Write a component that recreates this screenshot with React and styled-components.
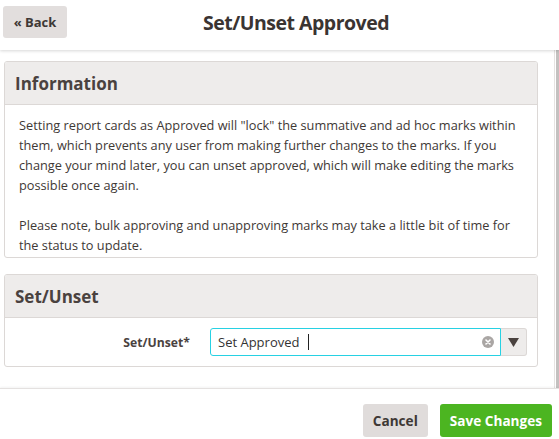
import styled, { createGlobalStyle } from "styled-components";

const Global = createGlobalStyle`
  * { box-sizing: border-box; }
  body {
    margin: 0;
    background: #ffffff;
    font-family: "Open Sans", "Noto Sans", sans-serif;
    color: #3e3835;
  }
`;

const Page = styled.div`
  width: 559px;
  height: 439px;
  display: flex;
  flex-direction: column;
  overflow: hidden;
`;

const Header = styled.header`
  height: 50px;
  display: flex;
  align-items: center;
  padding: 0 34px 0 3px;
  box-shadow: 0 1px 3px rgba(0, 0, 0, 0.16);
  position: relative;
  z-index: 1;
`;

const BackButton = styled.button`
  width: 64px;
  height: 32px;
  margin-top: -7px;
  border: none;
  border-radius: 3px;
  background: #e2dedd;
  color: #3e3835;
  font-family: inherit;
  font-weight: 700;
  font-size: 13px;
`;

const Title = styled.h1`
  flex: 1;
  margin: -5px 0 0;
  text-align: center;
  font-size: 19.5px;
  letter-spacing: -0.5px;
  font-weight: 700;
  color: #3a3432;
`;

const Body = styled.div`
  flex: 1;
  display: flex;
  min-height: 0;
`;

const Content = styled.main`
  flex: 1;
  padding: 11px 16px 0 4px;
  display: flex;
  flex-direction: column;
  gap: 16px;
`;

const Scroll = styled.div`
  width: 6px;
  border-left: 1px solid #e6e3e2;
  display: flex;
  justify-content: flex-end;
`;

const Thumb = styled.div`
  width: 3px;
  height: 100%;
  background: #c4c1c0;
`;

const Panel = styled.section`
  border: 1px solid #dcd8d6;
  border-radius: 3px;
  overflow: hidden;
`;

const PanelHead = styled.h2`
  margin: 0;
  height: 43px;
  display: flex;
  align-items: center;
  padding: 0 10px;
  background: #eeeceb;
  border-bottom: 1px solid #dcd8d6;
  font-size: 17px;
  font-weight: 700;
  color: #4a423f;
`;

const PanelText = styled.div`
  padding: 10px 14px 2px;
  font-size: 12.75px;
  line-height: 20px;
  color: #3e3835;

  p {
    margin: 0 0 20px;
  }
  p:last-child {
    margin-bottom: 0;
  }
`;

const FieldRow = styled.div`
  display: flex;
  align-items: center;
  padding: 10px 10px 10px 0;
  gap: 20px;
`;

const Label = styled.label`
  width: 185px;
  text-align: right;
  font-size: 12.2px;
  font-weight: 700;
  color: #4a423f;
`;

const Select = styled.div`
  display: flex;
  height: 28px;
`;

const Input = styled.div`
  width: 291px;
  display: flex;
  align-items: center;
  padding: 0 6px 0 7px;
  border: 1px solid #27d1e3;
  border-radius: 3px 0 0 3px;
  font-size: 13px;
  color: #333;
`;

const Caret = styled.span`
  width: 1px;
  height: 16px;
  background: #222;
  margin-left: 9px;
`;

const Clear = styled.span`
  margin-left: auto;
  display: flex;
`;

const Toggle = styled.div`
  width: 26px;
  display: flex;
  align-items: center;
  justify-content: center;
  background: #eeeceb;
  border: 1px solid #dcd8d6;
  border-left: none;
  border-radius: 0 3px 3px 0;
`;

const Footer = styled.footer`
  height: 51px;
  display: flex;
  justify-content: flex-end;
  align-items: center;
  gap: 12px;
  padding: 12px 7px 0 0;
  border-top: 1px solid #e4e1e0;
  box-shadow: 0 -1px 2px rgba(0, 0, 0, 0.05);
`;

const Button = styled.button`
  height: 33px;
  padding: 0 10px;
  border: none;
  border-radius: 3px;
  font-family: inherit;
  font-size: 13.6px;
  font-weight: 700;
  background: ${(p) => (p.$primary ? "#4cb521" : "#e0dcdb")};
  color: ${(p) => (p.$primary ? "#ffffff" : "#3e3835")};
`;

export default function App() {
  return (
    <Page>
      <Global />
      <Header>
        <BackButton>« Back</BackButton>
        <Title>Set/Unset Approved</Title>
      </Header>
      <Body>
        <Content>
          <Panel>
            <PanelHead>Information</PanelHead>
            <PanelText>
              <p>
                Setting report cards as Approved will "lock" the summative and ad hoc marks within
                them, which prevents any user from making further changes to the marks. If you
                change your mind later, you can unset approved, which will make editing the marks
                possible once again.
              </p>
              <p>
                Please note, bulk approving and unapproving marks may take a little bit of time for
                the status to update.
              </p>
            </PanelText>
          </Panel>
          <Panel>
            <PanelHead>Set/Unset</PanelHead>
            <FieldRow>
              <Label>Set/Unset*</Label>
              <Select>
                <Input>
                  Set Approved
                  <Caret />
                  <Clear>
                    <svg width="12" height="12" viewBox="0 0 12 12">
                      <circle cx="6" cy="6" r="6" fill="#aaa6a4" />
                      <path d="M4 4l4 4M8 4l-4 4" stroke="#fff" strokeWidth="1.6" strokeLinecap="round" />
                    </svg>
                  </Clear>
                </Input>
                <Toggle>
                  <svg width="11" height="9" viewBox="0 0 11 9">
                    <path d="M0 0h11L5.5 9z" fill="#4a423f" />
                  </svg>
                </Toggle>
              </Select>
            </FieldRow>
          </Panel>
        </Content>
        <Scroll>
          <Thumb />
        </Scroll>
      </Body>
      <Footer>
        <Button>Cancel</Button>
        <Button $primary>Save Changes</Button>
      </Footer>
    </Page>
  );
}
